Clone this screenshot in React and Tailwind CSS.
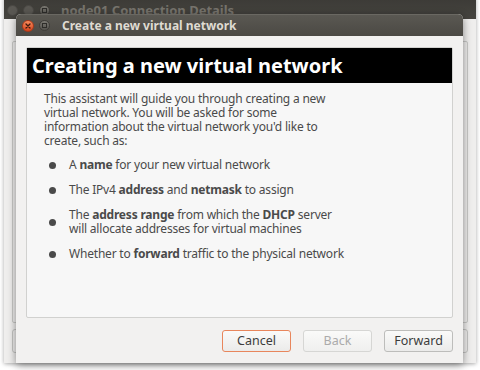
import React from "react";

const font = { fontFamily: '"Noto Sans", "Open Sans", sans-serif' };

const items = [
    <>A <b>name</b> for your new virtual network</>,
    <>The IPv4 <b>address</b> and <b>netmask</b> to assign</>,
    <>The <b>address range</b> from which the <b>DHCP</b> server<br />will allocate addresses for virtual machines</>,
    <>Whether to <b>forward</b> traffic to the physical network</>,
];

const TitleButtons = ({ faded }) => (
    <div className="flex items-center gap-[5px]">
        {faded && <span className="w-[11px] h-[11px] rounded-full bg-[#5a5853] border border-[#4a4844]" />}
        <span
            className={
                faded
                    ? "w-[11px] h-[11px] rounded-full bg-[#5a5853] border border-[#4a4844]"
                    : "w-[12px] h-[12px] rounded-full bg-gradient-to-b from-[#f58a5c] to-[#d5431b] border border-[#a8391a] flex items-center justify-center"
            }
        >
            {!faded && (
                <svg width="6" height="6" viewBox="0 0 6 6">
                    <path d="M1 1L5 5M5 1L1 5" stroke="#3b1a0e" strokeWidth="1.3" strokeLinecap="round" />
                </svg>
            )}
        </span>
        <span className="w-[11px] h-[11px] rounded-full bg-gradient-to-b from-[#7a7872] to-[#55534e] border border-[#3f3d39] flex items-center justify-center">
            <span className="w-[5px] h-[5px] border border-[#2e2d2a]" />
        </span>
    </div>
);

const Btn = ({ children, variant }) => {
    const cls =
        variant === "focus"
            ? "border-[#e8865c] text-[#3c3c3c]"
            : variant === "disabled"
                ? "border-[#d6d6d4] text-[#ababab] from-[#f3f3f2] to-[#efefee]"
                : "border-[#bdbdbb] text-[#3c3c3c]";
    return (
        <div className={`h-[22px] w-[69px] rounded-[3px] border bg-gradient-to-b from-[#fafaf9] to-[#ebebea] flex items-center justify-center text-[12.5px] ${cls}`}>
            {children}
        </div>
    );
};

export default function App() {
    return (
        <div className="relative w-[480px] h-[370px] bg-white overflow-hidden" style={font}>
            {/* window behind */}
            <div className="absolute left-[4px] top-[-6px] w-[472px] h-[369px] rounded-t-[5px] bg-[#efeeed] shadow-[0_1px_4px_rgba(0,0,0,0.35)] flex flex-col overflow-hidden">
                <div className="h-[25px] shrink-0 bg-gradient-to-b from-[#3a3935] to-[#46443f] flex items-end pb-[3px] pl-[3px] gap-[11px]">
                    <TitleButtons faded />
                    <span className="text-[13px] font-bold text-[#77746d] leading-none mb-[-1px]">node01 Connection Details</span>
                </div>
                <div className="flex-1 flex px-[8px] pt-[22px] pb-[10px]">
                    <div className="flex-1 flex flex-col gap-[6px]">
                        <div className="flex-1 border border-[#c9c9c7] rounded-[2px]" />
                        <div className="h-[24px] flex justify-between">
                            <div className="w-[40px] border border-[#c5c5c3] rounded-[3px]" />
                            <div className="w-[40px] border border-[#c5c5c3] rounded-[3px]" />
                        </div>
                    </div>
                </div>
            </div>

            {/* dialog */}
            <div className="absolute left-[16px] top-[14px] w-[447px] h-[349px] rounded-t-[5px] bg-[#f2f1f0] shadow-[0_2px_8px_rgba(0,0,0,0.45)] flex flex-col overflow-hidden">
                <div className="h-[22px] shrink-0 bg-gradient-to-b from-[#5a5852] to-[#4b4944] border-t border-[#6a6862] flex items-center pl-[6px] gap-[12px]">
                    <TitleButtons />
                    <span className="text-[12px] font-bold text-[#dfdbd2] leading-none">Create a new virtual network</span>
                </div>
                <div className="flex-1 flex flex-col px-[10px] pt-[11px] pb-[11px]">
                    <div className="h-[271px] bg-[#f7f7f7] border border-[#d1d1cf] rounded-[2px] flex flex-col">
                        <div className="h-[35px] bg-black flex items-center pl-[5px]">
                            <span className="text-[20px] font-bold text-white leading-none">Creating a new virtual network</span>
                        </div>
                        <div className="pl-[17px] pt-[9px] text-[12px] leading-[14px] tracking-[-0.2px] text-[#4a4a4a]">
                            <p>
                                This assistant will guide you through creating a new<br />
                                virtual network. You will be asked for some<br />
                                information about the virtual network you'd like to<br />
                                create, such as:
                            </p>
                            <ul className="mt-[10px] flex flex-col gap-[11px]">
                                {items.map((t, i) => (
                                    <li key={i} className="flex items-center">
                                        <span className="w-[7px] h-[7px] rounded-full bg-[#4a4a4a] ml-[5px] mr-[13px] shrink-0" />
                                        <span>{t}</span>
                                    </li>
                                ))}
                            </ul>
                        </div>
                    </div>
                    <div className="mt-auto flex justify-end gap-[12px]">
                        <Btn variant="focus">Cancel</Btn>
                        <Btn variant="disabled">Back</Btn>
                        <Btn>Forward</Btn>
                    </div>
                </div>
            </div>
        </div>
    );
}
